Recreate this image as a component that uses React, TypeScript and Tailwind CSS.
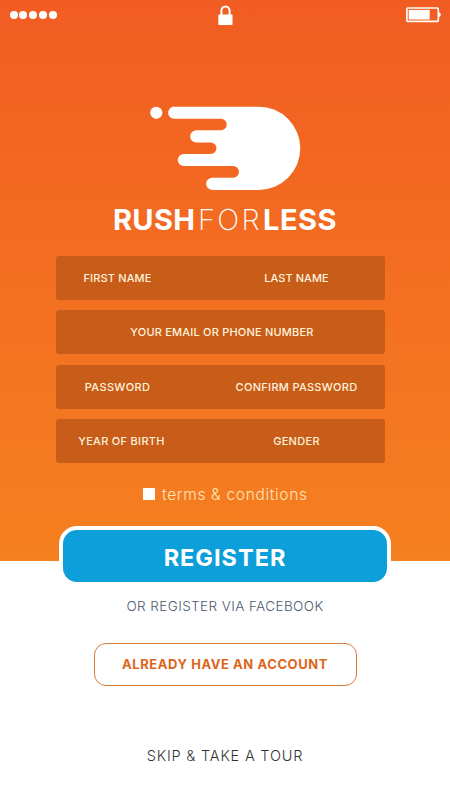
import { clsx } from "clsx"

type Field = { label: string; className: string }

const rows: Field[][] = [
  [
    { label: "FIRST NAME", className: "w-[123px] tracking-[0.15px]" },
    { label: "LAST NAME", className: "w-[235px] tracking-[0.05px]" },
  ],
  [{ label: "YOUR EMAIL OR PHONE NUMBER", className: "w-[332px] tracking-[0.2px]" }],
  [
    { label: "PASSWORD", className: "w-[123px] tracking-[0.35px]" },
    { label: "CONFIRM PASSWORD", className: "w-[235px] tracking-[0.3px]" },
  ],
  [
    { label: "YEAR OF BIRTH", className: "w-[131px] tracking-[0.3px]" },
    { label: "GENDER", className: "w-[219px] tracking-[0.3px]" },
  ],
]

function StatusBar() {
  return (
    <div className="flex h-[30px] shrink-0 items-center justify-between pl-[9.5px] pr-2 text-white">
      <div className="flex w-[200px] gap-[1.8px]">
        {[0, 1, 2, 3, 4].map((i) => (
          <span key={i} className="h-2 w-2 rounded-full bg-white" />
        ))}
      </div>
      <svg width="15" height="22" viewBox="0 0 15 22">
        <path d="M3.4 12V7a4.1 4.6 0 0 1 8.2 0v5" fill="none" stroke="currentColor" strokeWidth="2" />
        <rect x="0.3" y="10.6" width="14.2" height="10.3" rx="0.6" fill="currentColor" />
      </svg>
      <div className="flex w-[200px] justify-end">
        <svg width="36" height="16" viewBox="0 0 36 16">
          <rect x="0.9" y="1" width="31.4" height="13.4" rx="0.8" fill="none" stroke="currentColor" strokeWidth="1.6" />
          <rect x="2.7" y="2.9" width="21" height="9.6" fill="currentColor" />
          <path d="M33 5.2a2.6 2.6 0 0 1 0 5z" fill="currentColor" />
        </svg>
      </div>
    </div>
  )
}

function Logo() {
  return (
    <svg width="151" height="84" viewBox="0 0 151 84" fill="white">
      <circle cx="6.3" cy="6.8" r="6.1" />
      <path d="M24.2 0.7H108.7a41.6 41.6 0 0 1 0 83.2H62.2a6.1 6.1 0 0 1 0-12.2H83.2a5.8 5.8 0 0 0 0-11.6H33.8a6.1 6.1 0 0 1 0-12.2H60.8a5.7 5.7 0 0 0 0-11.4H46.3a6.1 6.1 0 0 1 0-12.2H71a5.7 5.7 0 0 0 0-11.5H24.2a6.1 6.1 0 0 1 0-12.2z" />
    </svg>
  )
}

export default function App() {
  return (
    <div className="h-[800px] w-[450px] overflow-hidden bg-white font-['Inter',sans-serif]">
      <section className="flex h-[561px] flex-col bg-linear-to-b from-[#f15c22] to-[#f58020]">
        <StatusBar />

        <div className="mt-[76px] flex shrink-0 flex-col pl-[150px]">
          <Logo />
        </div>

        <h1 className="mt-[14px] flex h-8 shrink-0 items-center justify-center whitespace-nowrap text-[29px] leading-8 text-white">
          <span className="font-bold tracking-[0.4px]">RUSH</span>
          <span className="ml-[2.5px] font-extralight tracking-[2.4px]">FOR</span>
          <span className="ml-px font-bold tracking-[0.5px]">LESS</span>
        </h1>

        <form className="mt-5 ml-14 flex w-[329px] shrink-0 flex-col gap-[10.4px]">
          {rows.map((row, i) => (
            <div key={i} className="flex h-11 shrink-0 items-center rounded-[3px] bg-[#c85c19] text-[11px] font-medium text-[#fff3dc]">
              {row.map((field) => (
                <span key={field.label} className={clsx("shrink-0 whitespace-nowrap text-center", field.className)}>
                  {field.label}
                </span>
              ))}
            </div>
          ))}
        </form>

        <label className="mt-[21px] ml-[143px] flex h-5 shrink-0 items-center gap-[7px]">
          <span className="h-3 w-3 bg-white" />
          <span className="whitespace-nowrap text-[15.5px] font-light tracking-[0.67px] text-[#ffe6bd]">terms &amp; conditions</span>
        </label>

        <div className="mt-[22px] flex shrink-0 justify-center">
          <button className="h-[60px] w-[332px] shrink-0 rounded-[18px] border-4 border-white bg-[#0c9fd9] pt-0.5 text-[23.5px] font-bold tracking-[1px] text-white">
            REGISTER
          </button>
        </div>
      </section>

      <section className="flex flex-col items-center">
        <a className="mt-[35px] h-5 whitespace-nowrap text-[13.5px] font-light leading-5 tracking-[0.42px] text-[#4b5a70]">OR REGISTER VIA FACEBOOK</a>
        <button className="mt-[27px] h-[43px] w-[263px] whitespace-nowrap rounded-[12px] border border-[#dc7a3c] text-[13px] font-bold tracking-[0.57px] text-[#dc661c]">
          ALREADY HAVE AN ACCOUNT
        </button>
        <a className="mt-[60px] h-5 whitespace-nowrap text-[14.5px] font-light leading-5 tracking-[0.8px] text-[#333333]">SKIP &amp; TAKE A TOUR</a>
      </section>
    </div>
  )
}
